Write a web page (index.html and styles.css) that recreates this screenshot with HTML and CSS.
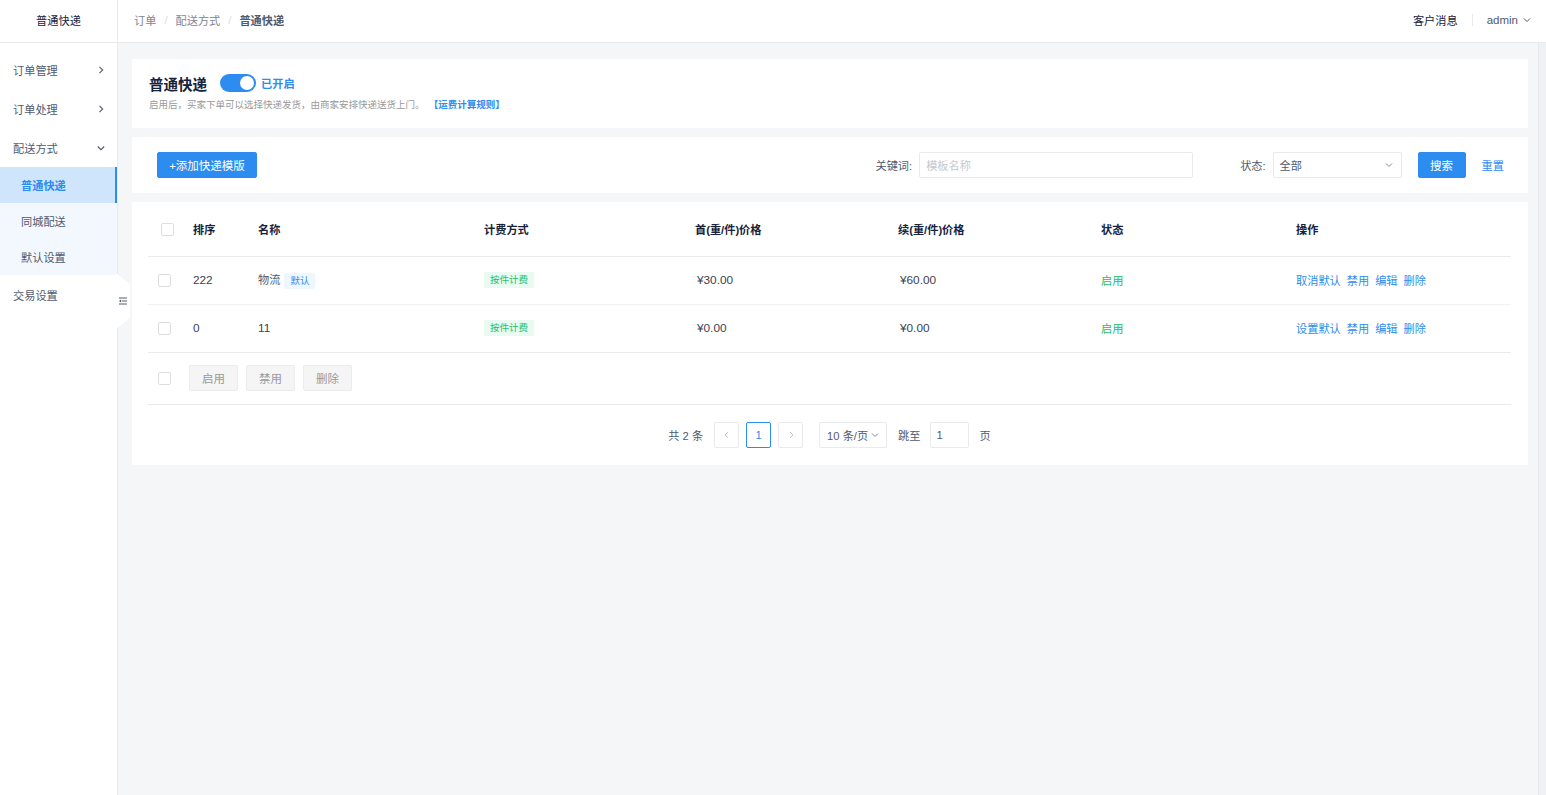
FILE: index.html
```html
<!DOCTYPE html>
<html lang="zh-CN">
<head>
<meta charset="utf-8">
<title>普通快递</title>
<link rel="stylesheet" href="styles.css">
</head>
<body>
<div class="app">
  <aside class="sider">
    <div class="sider-head">普通快递</div>
    <ul class="menu">
      <li class="menu-item"><span>订单管理</span><svg class="chev" width="8" height="8" viewBox="0 0 8 8"><path d="M2.5 0.8 L5.7 4 L2.5 7.2" fill="none" stroke="#515a6e" stroke-width="1.1"/></svg></li>
      <li class="menu-item"><span>订单处理</span><svg class="chev" width="8" height="8" viewBox="0 0 8 8"><path d="M2.5 0.8 L5.7 4 L2.5 7.2" fill="none" stroke="#515a6e" stroke-width="1.1"/></svg></li>
      <li class="menu-item"><span>配送方式</span><svg class="chev" width="8" height="8" viewBox="0 0 8 8"><path d="M0.8 2.5 L4 5.7 L7.2 2.5" fill="none" stroke="#515a6e" stroke-width="1.1"/></svg></li>
      <li class="submenu">
        <div class="sub-item active">普通快递</div>
        <div class="sub-item">同城配送</div>
        <div class="sub-item">默认设置</div>
      </li>
      <li class="menu-item"><span>交易设置</span></li>
    </ul>
    <div class="collapse-tab">
      <svg width="9" height="8" viewBox="0 0 9 8"><path d="M1 1 H9 M4 4 H9 M1 7 H9" stroke="#515a6e" stroke-width="1"/><path d="M3.2 2.6 L1 4 L3.2 5.4 Z" fill="#515a6e"/></svg>
    </div>
  </aside>

  <div class="main">
    <header class="topbar">
      <nav class="crumbs">
        <span class="crumb">订单</span><span class="sep">/</span>
        <span class="crumb">配送方式</span><span class="sep">/</span>
        <span class="crumb current">普通快递</span>
      </nav>
      <div class="top-right">
        <span class="msg">客户消息</span>
        <span class="vdiv"></span>
        <span class="user">admin <svg width="8" height="8" viewBox="0 0 8 8"><path d="M1 2.5 L4 5.5 L7 2.5" fill="none" stroke="#515a6e" stroke-width="1"/></svg></span>
      </div>
    </header>

    <div class="body">
      <div class="content">
        <section class="card intro">
          <div class="intro-title">
            <h1>普通快递</h1>
            <span class="switch"><span class="knob"></span></span>
            <span class="switch-label">已开启</span>
          </div>
          <p class="intro-desc">启用后，买家下单可以选择快递发货，由商家安排快递送货上门。<a class="rule-link">【运费计算规则】</a></p>
        </section>

        <section class="card toolbar">
          <button class="btn btn-primary add-btn">+添加快递模版</button>
          <div class="filters">
            <label class="f-label">关键词:</label>
            <div class="input kw">模板名称</div>
            <label class="f-label status-label">状态:</label>
            <div class="input select"><span>全部</span><svg width="8" height="8" viewBox="0 0 8 8"><path d="M1 2.5 L4 5.5 L7 2.5" fill="none" stroke="#808695" stroke-width="1"/></svg></div>
            <button class="btn btn-primary search-btn">搜索</button>
            <a class="reset">重置</a>
          </div>
        </section>

        <section class="card list">
          <table class="tbl">
            <colgroup>
              <col class="c-chk"><col class="c-sort"><col class="c-name"><col class="c-fee"><col class="c-first"><col class="c-next"><col class="c-status"><col class="c-ops">
            </colgroup>
            <thead>
              <tr>
                <th class="chk-cell head-chk"><span class="checkbox"></span></th>
                <th>排序</th>
                <th>名称</th>
                <th>计费方式</th>
                <th>首(重/件)价格</th>
                <th>续(重/件)价格</th>
                <th>状态</th>
                <th>操作</th>
              </tr>
            </thead>
            <tbody>
              <tr>
                <td class="chk-cell"><span class="checkbox"></span></td>
                <td class="num">222</td>
                <td>物流<span class="tag tag-blue">默认</span></td>
                <td><span class="tag tag-green">按件计费</span></td>
                <td class="num price">¥30.00</td>
                <td class="num price">¥60.00</td>
                <td class="on">启用</td>
                <td class="ops"><a>取消默认</a><a>禁用</a><a>编辑</a><a>删除</a></td>
              </tr>
              <tr>
                <td class="chk-cell"><span class="checkbox"></span></td>
                <td class="num">0</td>
                <td class="num">11</td>
                <td><span class="tag tag-green">按件计费</span></td>
                <td class="num price">¥0.00</td>
                <td class="num price">¥0.00</td>
                <td class="on">启用</td>
                <td class="ops"><a>设置默认</a><a>禁用</a><a>编辑</a><a>删除</a></td>
              </tr>
            </tbody>
          </table>

          <div class="batch">
            <span class="checkbox"></span>
            <button class="btn btn-gray">启用</button>
            <button class="btn btn-gray">禁用</button>
            <button class="btn btn-gray">删除</button>
          </div>

          <div class="pager">
            <span class="total">共 2 条</span>
            <span class="pg-box prev"><svg width="8" height="8" viewBox="0 0 8 8"><path d="M5 1 L2 4 L5 7" fill="none" stroke="#c5c8ce" stroke-width="1"/></svg></span>
            <span class="pg-box cur">1</span>
            <span class="pg-box next"><svg width="8" height="8" viewBox="0 0 8 8"><path d="M3 1 L6 4 L3 7" fill="none" stroke="#c5c8ce" stroke-width="1"/></svg></span>
            <span class="pg-size">10 条/页 <svg width="8" height="8" viewBox="0 0 8 8"><path d="M1 2.5 L4 5.5 L7 2.5" fill="none" stroke="#808695" stroke-width="1"/></svg></span>
            <span class="jump">跳至</span>
            <span class="pg-input">1</span>
            <span class="page-word">页</span>
          </div>
        </section>
      </div>
      <div class="scroll-track"></div>
    </div>
  </div>
</div>
</body>
</html>
```

FILE: styles.css
```css
* { box-sizing: border-box; }
html, body { margin: 0; padding: 0; height: 100%; }
body {
  font-family: "Liberation Sans", "Noto Sans CJK SC", sans-serif;
  font-size: 11.2px;
  color: #515a6e;
  background: #f5f6f8;
}
ul { list-style: none; margin: 0; padding: 0; }
a { cursor: pointer; }
button { font-family: inherit; }

.app { display: flex; height: 795px; overflow: hidden; }

/* Sidebar */
.sider {
  position: relative;
  width: 118px;
  flex: none;
  background: #fff;
  border-right: 1px solid #e8eaec;
  z-index: 2;
}
.sider-head {
  height: 43px;
  border-bottom: 1px solid #e8eaec;
  display: flex;
  align-items: center;
  justify-content: center;
  padding-bottom: 3px;
  color: #17233d;
}
.menu { padding-top: 7px; }
.menu-item {
  height: 39px;
  display: flex;
  align-items: center;
  justify-content: space-between;
  padding: 0 12px 0 13px;
  color: #515a6e;
}
.chev { display: block; }
.submenu { background: #f3f8fe; }
.sub-item {
  height: 36px;
  display: flex;
  align-items: center;
  padding-left: 21px;
  color: #515a6e;
}
.sub-item.active {
  background: #cfe5fc;
  color: #2d8cf0;
  font-weight: bold;
  border-right: 2px solid #2d8cf0;
}
.collapse-tab {
  position: absolute;
  left: 116px;
  top: 273px;
  width: 14px;
  height: 56px;
  background: #fff;
  clip-path: polygon(0 0, 100% 11px, 100% calc(100% - 11px), 0 100%);
  display: flex;
  align-items: center;
  justify-content: flex-end;
  padding-right: 3px;
}
.collapse-tab svg { display: block; }

/* Main */
.main { flex: 1; display: flex; flex-direction: column; min-width: 0; }
.topbar {
  height: 43px;
  flex: none;
  background: #fff;
  border-bottom: 1px solid #e8eaec;
  display: flex;
  align-items: center;
  justify-content: space-between;
  padding: 0 15px 3px 16px;
}
.crumbs { display: flex; align-items: center; }
.crumb { color: #808695; }
.crumb.current { color: #515a6e; font-weight: bold; }
.sep { color: #dcdee2; margin: 0 8px; }
.top-right { display: flex; align-items: center; color: #17233d; }
.vdiv { width: 1px; height: 12px; background: #e8eaec; margin: 0 14px; }
.user { display: flex; align-items: center; gap: 5px; color: #515a6e; font-size: 11.5px; }
.user svg { display: block; }

.body { flex: 1; display: flex; min-height: 0; }
.content {
  flex: 1;
  padding: 16px 10px 0 14px;
  display: flex;
  flex-direction: column;
  gap: 9px;
}
.scroll-track {
  width: 8px;
  flex: none;
  background: #f0f1f3;
  border-left: 1px solid #e6e8eb;
}

.card { background: #fff; }

/* Intro card */
.intro { padding: 14px 17px 15px 17px; height: 69px; }
.intro-title { display: flex; align-items: center; height: 20px; }
.intro-title h1 {
  margin: 0;
  font-size: 14.5px;
  font-weight: bold;
  color: #17233d;
}
.switch {
  position: relative;
  width: 36px;
  height: 18px;
  border-radius: 9px;
  background: #2d8cf0;
  margin-left: 13px;
  display: inline-block;
}
.knob {
  position: absolute;
  right: 2px;
  top: 2px;
  width: 14px;
  height: 14px;
  border-radius: 50%;
  background: #fff;
}
.switch-label { color: #2d8cf0; font-weight: bold; margin-left: 5px; }
.intro-desc {
  margin: 5px 0 0;
  font-size: 9.5px;
  color: #999;
  line-height: 14px;
}
.rule-link { color: #2d8cf0; font-weight: bold; margin-left: 9px; }

/* Toolbar card */
.toolbar {
  display: flex;
  align-items: center;
  justify-content: space-between;
  height: 56px;
  padding: 0 24px 0 25px;
}
.btn {
  height: 26px;
  border: 1px solid transparent;
  border-radius: 2px;
  font-size: 11.5px;
  padding: 0;
  cursor: pointer;
}
.btn-primary { background: #2d8cf0; color: #fff; border-color: #2d8cf0; }
.add-btn { width: 100px; }
.filters { display: flex; align-items: center; }
.f-label { color: #515a6e; margin-right: 7px; }
.status-label { margin-left: 47px; }
.input {
  height: 26px;
  border: 1px solid #e8eaec;
  border-radius: 2px;
  display: flex;
  align-items: center;
  padding: 0 6px;
}
.kw { width: 274px; color: #c5c8ce; }
.select { width: 129px; justify-content: space-between; color: #515a6e; }
.select svg { display: block; margin-right: 2px; }
.search-btn { width: 48px; margin-left: 16px; }
.reset { color: #2d8cf0; margin-left: 16px; }

/* List card */
.list { padding: 0 17px 0 16px; }
.tbl { width: 100%; border-collapse: collapse; table-layout: fixed; }
.c-chk { width: 33px; }
.c-sort { width: 65px; }
.c-name { width: 226px; }
.c-fee { width: 211px; }
.c-first { width: 203px; }
.c-next { width: 203px; }
.c-status { width: 195px; }
.c-ops { width: 227px; }
.tbl th, .tbl td {
  text-align: left;
  padding: 0 0 0 12px;
  border-bottom: 1px solid #e8eaec;
  white-space: nowrap;
}
.tbl th {
  height: 54px;
  font-weight: bold;
  color: #17233d;
}
.tbl td { height: 48px; color: #515a6e; }
.tbl td.num { font-size: 11.8px; color: #3b4252; }
.tbl td.price { padding-left: 14px; }
.tbl tbody tr:first-child td { border-bottom-color: #f0f1f3; }
.tbl .chk-cell { padding-left: 10px; }
.tbl .head-chk { padding-left: 13px; }
.checkbox {
  display: inline-block;
  width: 13px;
  height: 13px;
  border: 1px solid #dcdee2;
  border-radius: 2px;
  background: #fff;
  vertical-align: middle;
}
.tag {
  display: inline-block;
  font-size: 9.5px;
  line-height: 16px;
  height: 16px;
  padding: 0 6px;
  border-radius: 2px;
  vertical-align: middle;
}
.tag-blue { background: #eef6ff; color: #2d8cf0; margin-left: 4px; padding: 0 6px; }
.tag-green { background: #e9fbf0; color: #19be6b; }
.on { color: #19be6b !important; }
.ops a { color: #2d8cf0; margin-right: 6px; }

.batch {
  height: 52px;
  border-bottom: 1px solid #e8eaec;
  display: flex;
  align-items: center;
  padding-left: 10px;
}
.batch .checkbox { margin-right: 18px; }
.btn-gray {
  width: 49px;
  height: 26px;
  background: #f5f5f5;
  border: 1px solid #ececec;
  color: #999;
  margin-right: 8px;
}

.pager {
  height: 60px;
  display: flex;
  align-items: center;
  justify-content: center;
  color: #515a6e;
}
.total { margin-right: 11px; }
.pg-box {
  width: 25px;
  height: 26px;
  border: 1px solid #e8eaec;
  border-radius: 2px;
  display: flex;
  align-items: center;
  justify-content: center;
  margin-right: 7px;
}
.pg-box.cur { border-color: #2d8cf0; color: #2d8cf0; }
.pg-box.next { margin-right: 16px; }
.pg-size {
  height: 26px;
  width: 68px;
  border: 1px solid #e8eaec;
  border-radius: 2px;
  display: flex;
  align-items: center;
  justify-content: center;
  gap: 3px;
  margin-right: 11px;
}
.jump { margin-right: 9px; }
.pg-input {
  width: 39px;
  height: 26px;
  border: 1px solid #e8eaec;
  border-radius: 2px;
  display: flex;
  align-items: center;
  padding-left: 6px;
  margin-right: 11px;
}
```
